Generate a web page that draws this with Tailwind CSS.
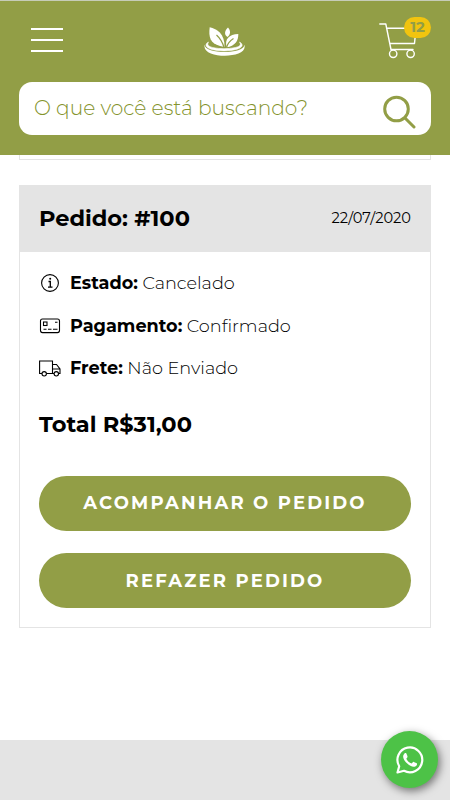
<!DOCTYPE html>
<html lang="pt-BR">
<head>
    <meta charset="UTF-8">
    <meta name="viewport" content="width=device-width, initial-scale=1.0">
    <title>Meus pedidos</title>
    <script src="https://cdn.jsdelivr.net/npm/@tailwindcss/browser@4"></script>
</head>
<body class="bg-white font-['Montserrat','Inter',sans-serif] text-black">
    <div class="h-[800px] w-[450px] flex flex-col overflow-hidden">
        <!-- Header -->
        <header class="h-[155px] shrink-0 bg-[#929e46] border-t border-[#c6ccb8] px-[19px]">
            <div class="h-[81px] flex items-center justify-between pl-3 pr-[13px]">
                <button class="w-8 mb-[3px] flex flex-col gap-[9px]" aria-label="Menu">
                    <span class="h-0.5 w-full bg-white"></span>
                    <span class="h-0.5 w-full bg-white"></span>
                    <span class="h-0.5 w-full bg-white"></span>
                </button>
                <svg class="w-[44px] h-[32px] ml-[7px]" viewBox="0 0 44 32" fill="none">
                    <path d="M6.700 1.300C14 3 22 8 21.500 21L17 20C7 17.500 5.500 11 6.700 1.300Z" fill="#fff"/>
                    <path d="M35.300 8C35.500 15 32 20 23.500 21.300C21.500 13 26 8.500 35.300 8Z" fill="#fff"/>
                    <path d="M25 1.500C28 5 27.500 8.500 24.500 11C20.800 8.500 21.500 5 25 1.500Z" fill="#fff"/>
                    <path d="M13.500 9Q19 14 21 21.500M30.500 12.500Q25 16 23.500 21.500" stroke="#929e46" stroke-width="1.200"/>
                    <path d="M5.500 16C1 18.500 3 21.500 8 23.200C16 25.500 26 25.500 34 23.200C39.500 21.500 41 18.500 36.500 16C39 19.500 36 20.800 31 21.800C25 23 17 23 11 21.800C6 20.800 3.500 19 5.500 16Z" fill="#fff" stroke="#fff" stroke-width=".6"/>
                    <path d="M1.800 18.500C-3 33.500 47 33.500 41.200 18.500C42.500 28.500 .5 28.500 1.800 18.500Z" fill="#fff"/>
                </svg>
                <div class="relative w-[39px] h-9 mb-[2px]">
                    <svg class="w-[39px] h-9" viewBox="0 0 39 36" fill="none" stroke="#fff" stroke-width="1.400" stroke-linecap="round" stroke-linejoin="round">
                        <path d="M.8 1H6.800L12 26.500H34M8 5.200H37L35.500 20.500H11"/>
                        <circle cx="14.200" cy="30.800" r="3.700"/>
                        <circle cx="31.600" cy="30.800" r="3.700"/>
                    </svg>
                    <span class="absolute -top-[6px] left-[25px] w-[27px] h-[21px] rounded-full bg-[#f1c40f] text-[#929e46] text-[15px] font-bold flex items-center justify-center">12</span>
                </div>
            </div>
            <div class="h-[53px] bg-white rounded-[13px] pl-[15px] pr-[15px] flex items-center justify-between text-[#84932c]">
                <span class="text-[20.200px] font-light">O que você está buscando?</span>
                <svg class="w-[34px] h-[34px] mt-[7px]" viewBox="0 0 34 34" fill="none" stroke="#929e46" stroke-width="3" stroke-linecap="round">
                    <circle cx="14.500" cy="14" r="11.800"/>
                    <path d="M23 23L32 32"/>
                </svg>
            </div>
        </header>

        <main class="px-[19px]">
            <!-- Previous order, scrolled away -->
            <div class="h-[5px] border border-t-0 border-[#e4e4e4]"></div>

            <!-- Order -->
            <article class="mt-[25px] h-[443px] border border-[#e4e4e4]">
                <div class="h-[66px] bg-[#e4e4e4] px-[19px] flex items-center justify-between">
                    <h2 class="text-[22.500px] font-bold">Pedido: #100</h2>
                    <span class="text-[14.600px]">22/07/2020</span>
                </div>
                <div class="px-[19px] pt-[10px]">
                    <div class="h-[42.500px] flex items-center">
                        <svg class="w-[22px] h-[20px] mr-[9px]" viewBox="0 0 22 20" fill="none" stroke="#000" stroke-width="1.100">
                            <circle cx="11" cy="10" r="8.400"/>
                            <circle cx="11.200" cy="5.800" r="1" fill="#000" stroke="none"/>
                            <path d="M9.500 8.500H11.300V14M9 14.200H13.500" stroke-width="1.300"/>
                        </svg>
                        <p class="text-[17.650px] font-light"><b class="font-bold">Estado:</b> Cancelado</p>
                    </div>
                    <div class="h-[42.500px] flex items-center">
                        <svg class="w-[22px] h-[20px] mr-[9px]" viewBox="0 0 22 20" fill="none" stroke="#000" stroke-width="1.100">
                            <rect x="1.500" y="3" width="19" height="13.600" rx="2"/>
                            <rect x="4.500" y="6" width="3.500" height="3.500"/>
                            <path d="M16 6.200H18.500M4.500 13.200H7.500M9 13.200H12.500M14 13.200H18.500"/>
                        </svg>
                        <p class="text-[17.650px] font-light"><b class="font-bold">Pagamento:</b> Confirmado</p>
                    </div>
                    <div class="h-[42.500px] flex items-center">
                        <svg class="w-[22px] h-[20px] mr-[9px]" viewBox="0 0 22 20" fill="none" stroke="#000" stroke-width="1.100">
                            <path d="M3 15.500H.6V3H13.500V15.500H7.500M13.500 6.500H17.500L21 11V15.500H19.500M15 15.500H13.500M13.500 11H21"/>
                            <circle cx="5.200" cy="15.800" r="2.200"/>
                            <circle cx="17.300" cy="15.800" r="2.200"/>
                        </svg>
                        <p class="text-[17.650px] font-light"><b class="font-bold">Frete:</b> Não Enviado</p>
                    </div>
                    <p class="mt-[17px] h-[36px] leading-[35px] text-[22.500px] font-bold">Total R$31,00</p>
                    <button class="mt-[33px] block w-full h-[55px] rounded-full bg-[#929e46] text-white text-lg font-bold tracking-[2.180px]">ACOMPANHAR O PEDIDO</button>
                    <button class="mt-[22px] block w-full h-[55px] pt-px rounded-full bg-[#929e46] text-white text-lg font-bold tracking-[2.180px]">REFAZER PEDIDO</button>
                </div>
            </article>
        </main>

        <footer class="mt-auto h-[60px] shrink-0 bg-[#e4e4e4]"></footer>
    </div>

    <!-- WhatsApp -->
    <a class="fixed left-[381px] top-[731px] w-[57px] h-[57px] rounded-full bg-[#4dc247] shadow-[2px_3px_9px_rgba(0,0,0,0.5)] flex items-center justify-center" aria-label="WhatsApp">
        <svg class="w-[28px] h-[28px]" viewBox="0 0 28 28" fill="none">
            <path d="M1.500 26.500L3.200 20.200A12.400 12.400 0 1 1 8 24.800Z" stroke="#fff" stroke-width="2.200" stroke-linejoin="round"/>
            <path d="M10.400 7.500C9.900 6.800 9 6.900 8.500 7.400C5.500 10.300 8 14.200 11 17.200C14.500 20.700 18.500 22 20.600 19.400C21.200 18.600 21.200 17.600 20.700 17.300L17.800 15.900C17.300 15.700 16.900 16 16.600 16.400L15.600 17.600C13.300 16.900 11.300 15 10.300 12.800L11.300 11.500C11.600 11 11.600 10.600 11.400 10Z" fill="#fff"/>
        </svg>
    </a>
</body>
</html>
